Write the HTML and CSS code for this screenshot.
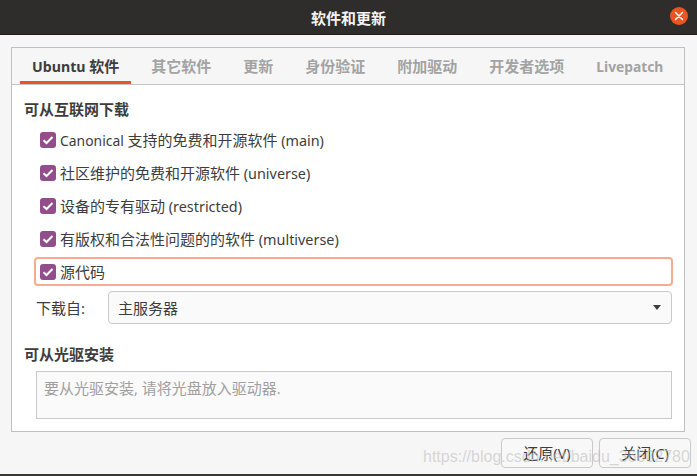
FILE: index.html
```html
<!DOCTYPE html>
<html lang="zh-CN">
<head>
    <meta charset="UTF-8">
    <title>软件和更新</title>
    <link rel="stylesheet" href="styles.css">
</head>
<body>
    <div class="titlebar">
        <span class="title">软件和更新</span>
        <span class="close-btn">
            <svg width="16" height="16" viewBox="0 0 16 16"><path d="M4.5 4.5l7 7M11.5 4.5l-7 7" stroke="#fff" stroke-width="1.5" stroke-linecap="round"/></svg>
        </span>
    </div>
    <div class="window">
        <div class="notebook">
            <div class="tabs">
                <div class="tab active"><span class="latin ubuntu">Ubuntu </span>软件</div>
                <div class="tab">其它软件</div>
                <div class="tab">更新</div>
                <div class="tab">身份验证</div>
                <div class="tab">附加驱动</div>
                <div class="tab">开发者选项</div>
                <div class="tab"><span class="latin">Livepatch</span></div>
            </div>
            <div class="page">
                <h3 class="heading">可从互联网下载</h3>
                <div class="check-row first"><span class="check"><svg width="16" height="16" viewBox="0 0 16 16"><path d="M3.5 8.2l3 2.8 6-6" fill="none" stroke="#fff" stroke-width="2"/></svg></span><span class="label"><span class="latin narrow">Canonical </span>支持的免费和开源软件<span class="latin"> (main)</span></span></div>
                <div class="check-row"><span class="check"><svg width="16" height="16" viewBox="0 0 16 16"><path d="M3.5 8.2l3 2.8 6-6" fill="none" stroke="#fff" stroke-width="2"/></svg></span><span class="label">社区维护的免费和开源软件<span class="latin"> (universe)</span></span></div>
                <div class="check-row"><span class="check"><svg width="16" height="16" viewBox="0 0 16 16"><path d="M3.5 8.2l3 2.8 6-6" fill="none" stroke="#fff" stroke-width="2"/></svg></span><span class="label">设备的专有驱动<span class="latin"> (restricted)</span></span></div>
                <div class="check-row"><span class="check"><svg width="16" height="16" viewBox="0 0 16 16"><path d="M3.5 8.2l3 2.8 6-6" fill="none" stroke="#fff" stroke-width="2"/></svg></span><span class="label">有版权和合法性问题的的软件<span class="latin"> (multiverse)</span></span></div>
                <div class="check-row focused"><span class="check"><svg width="16" height="16" viewBox="0 0 16 16"><path d="M3.5 8.2l3 2.8 6-6" fill="none" stroke="#fff" stroke-width="2"/></svg></span><span class="label">源代码</span></div>
                <div class="source-row">
                    <span class="source-label">下载自:</span>
                    <div class="combo">
                        <span>主服务器</span>
                        <span class="arrow"></span>
                    </div>
                </div>
                <h3 class="heading cdrom">可从光驱安装</h3>
                <div class="cd-box">要从光驱安装<span class="latin">, </span>请将光盘放入驱动器<span class="latin">.</span></div>
            </div>
        </div>
        <div class="actions">
            <div class="btn">还原<span class="latin">(V)</span></div>
            <div class="btn">关闭<span class="latin">(C)</span></div>
        </div>
    </div>
    <div class="watermark">https://blog.csdn.net/baidu_36602780</div>
    <div class="desktop"></div>
</body>
</html>
```

FILE: styles.css
```css
html, body {
    margin: 0;
    padding: 0;
    height: 476px;
    overflow: hidden;
}
body {
    position: relative;
    font-family: "Noto Sans", "Noto Sans CJK SC", sans-serif;
    font-size: 15px;
    color: #3d3d3d;
    background: #f6f6f6;
}
.latin {
    font-size: 14.4px;
}
.latin.narrow {
    font-size: 13.9px;
}
.titlebar {
    height: 34px;
    background: #2f2d2c;
    border-bottom: 1px solid #1f1e1d;
    position: relative;
    display: flex;
    align-items: center;
    justify-content: center;
}
.title {
    color: #f4f4f4;
    font-family: "Noto Sans CJK SC", sans-serif;
    font-size: 15px;
    font-weight: 700;
}
.close-btn {
    position: absolute;
    right: 9px;
    top: 7px;
    width: 18px;
    height: 18px;
    border-radius: 50%;
    background: #e95420;
    display: flex;
    align-items: center;
    justify-content: center;
}
.window {
    height: 439px;
    padding: 12px 12px 0 11px;
    box-sizing: border-box;
    background: #f6f6f6;
}
.notebook {
    height: 385px;
    box-sizing: border-box;
    border: 1px solid #bfbfbf;
    background: #fff;
}
.tabs {
    display: flex;
    height: 37px;
    box-sizing: border-box;
    padding-left: 8px;
    background: #f6f6f6;
    border-bottom: 1px solid #c4c4c4;
}
.tab {
    height: 36px;
    box-sizing: border-box;
    padding: 0 12px;
    margin-right: 8px;
    line-height: 36px;
    font-weight: 700;
    color: #a3a3a3;
    white-space: nowrap;
}
.tab .latin {
    font-size: 13.8px;
}
.tab .latin.ubuntu {
    font-size: 14.2px;
}
.tab.active {
    color: #3d3d3d;
    border-bottom: 3px solid #e95420;
}
.page {
    padding: 0 12px 0 12px;
}
.heading {
    margin: 0;
    line-height: 20px;
    font-size: 15px;
    font-weight: 700;
    color: #3d3d3d;
    padding-top: 14px;
}
.check-row {
    height: 29px;
    margin-top: 4px;
    margin-left: 11px;
    display: flex;
    align-items: center;
    box-sizing: border-box;
    padding-left: 3px;
    border: 2px solid transparent;
    border-radius: 4px;
    white-space: nowrap;
}
.check-row.first {
    margin-top: 6px;
}
.check-row.focused {
    border-color: #f6aa90;
    margin-left: 10px;
    margin-right: -1px;
    padding-left: 4px;
}
.check {
    width: 16px;
    height: 16px;
    margin-right: 4px;
    border-radius: 3px;
    background: #924d8b;
    flex: none;
    display: flex;
}
.source-row {
    display: flex;
    align-items: center;
    margin-top: 5px;
    margin-left: 12px;
}
.source-label {
    width: 72px;
}
.combo {
    flex: 1;
    height: 33px;
    box-sizing: border-box;
    border: 1px solid #c9c9c9;
    border-radius: 4px;
    background: #fafafa;
    display: flex;
    align-items: center;
    justify-content: space-between;
    padding: 0 10px 0 9px;
}
.arrow {
    width: 0;
    height: 0;
    border-left: 4.5px solid transparent;
    border-right: 4.5px solid transparent;
    border-top: 5px solid #3d3d3d;
}
.heading.cdrom {
    padding-top: 20px;
}
.cd-box {
    margin-top: 7px;
    margin-left: 12px;
    height: 48px;
    box-sizing: border-box;
    border: 1px solid #c9c9c9;
    background: #fafafa;
    color: #a0a0a0;
    padding: 5px 7px;
}
.actions {
    display: flex;
    justify-content: flex-end;
    gap: 6px;
    padding: 6px 0 0 0;
    margin-right: -6px;
}
.btn {
    width: 92px;
    height: 30px;
    box-sizing: border-box;
    border: 1px solid #c9c9c9;
    border-radius: 4px;
    background: #f8f8f8;
    text-align: center;
    line-height: 28px;
}
.watermark {
    position: absolute;
    left: 423px;
    top: 448px;
    color: rgba(190, 190, 190, 0.6);
    font-family: "Liberation Sans", sans-serif;
    font-size: 16px;
    white-space: nowrap;
}
.desktop {
    position: absolute;
    left: 0;
    right: 0;
    top: 474px;
    height: 2px;
    background: #3a3835;
}
```
